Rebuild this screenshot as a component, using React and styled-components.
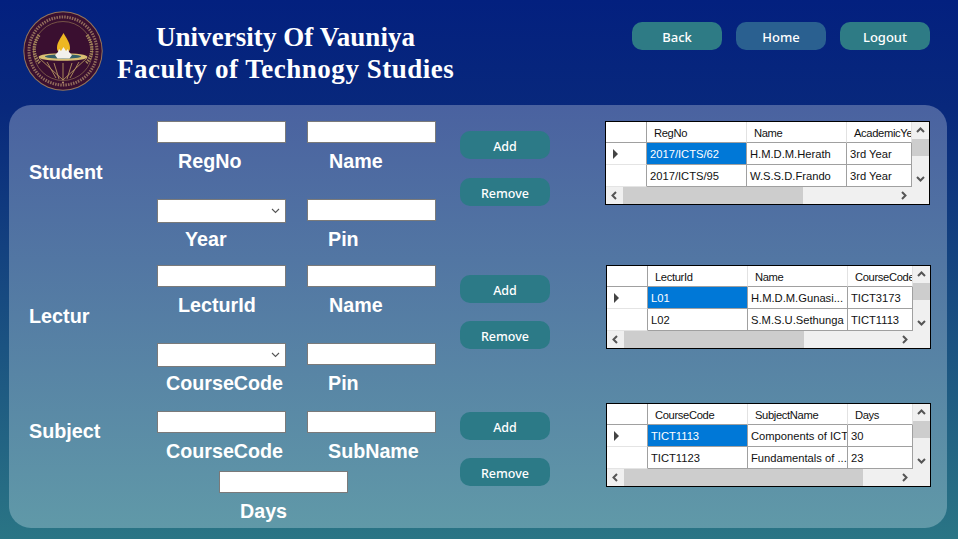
import React from 'react';
import styled, { createGlobalStyle } from 'styled-components';

const GlobalStyle = createGlobalStyle`
  html, body {
    margin: 0;
    padding: 0;
  }
  * {
    box-sizing: border-box;
  }
`;

const students = {
  columns: ['RegNo', 'Name', 'AcademicYear'],
  rows: [
    ['2017/ICTS/62', 'H.M.D.M.Herath', '3rd Year'],
    ['2017/ICTS/95', 'W.S.S.D.Frando', '3rd Year'],
  ],
  thumb: 180,
};

const lecturers = {
  columns: ['LecturId', 'Name', 'CourseCode'],
  rows: [
    ['L01', 'H.M.D.M.Gunasi...', 'TICT3173'],
    ['L02', 'S.M.S.U.Sethunga', 'TICT1113'],
  ],
  thumb: 180,
};

const subjects = {
  columns: ['CourseCode', 'SubjectName', 'Days'],
  rows: [
    ['TICT1113', 'Components of ICT', '30'],
    ['TICT1123', 'Fundamentals of ...', '23'],
  ],
  thumb: 239,
};

const Logo = () => (
  <svg width="80" height="80" viewBox="0 0 80 80">
    <circle cx="40" cy="40" r="39.7" fill="#96755a" />
    <circle cx="40" cy="40" r="38.7" fill="#3a0f30" />
    <circle cx="40" cy="40" r="34" fill="none" stroke="#c9a878" strokeWidth="3" strokeDasharray="1.5 1.1" opacity="0.6" />
    <circle cx="40" cy="40" r="29.5" fill="none" stroke="#8f7050" strokeWidth="0.7" />
    {/* wreath */}
    <path d="M16 24 C9 34 10 46 17 52" fill="none" stroke="#a5875c" strokeWidth="3.4" strokeDasharray="1.4 1" />
    <path d="M64 24 C71 34 70 46 63 52" fill="none" stroke="#a5875c" strokeWidth="3.4" strokeDasharray="1.4 1" />
    {/* flame */}
    <path d="M40.5 22 C43 27 47 31 47 37 C47 41 44 42 40.5 42 C37 42 34 41 34 37 C34 31 38 27 40.5 22 Z" fill="#eeb722" />
    {/* bowl */}
    <path
      d="M16 47 L40 69 L64 47 M24 51 L33 67 M31 52 L36 68 M40 52 L40 69 M49 52 L44 68 M56 51 L47 67"
      fill="none"
      stroke="#b4935f"
      strokeWidth="0.9"
    />
    <ellipse cx="40" cy="46" rx="24.5" ry="3.8" fill="#d9bf73" />
    <ellipse cx="40" cy="45.5" rx="18" ry="2.2" fill="#34606a" />
    {/* lotus */}
    <path d="M32 44 L35 41 L36 38 L38 40 L40.5 36 L43 40 L45 38 L46 41 L49 44 L46.5 47.5 L34.5 47.5 Z" fill="#f2f0ec" />
    <circle cx="40" cy="71.5" r="0.9" fill="#c9a878" />
  </svg>
);

const Chevron = () => (
  <svg width="9" height="6" viewBox="0 0 9 6">
    <path d="M1 1 L4.5 4.5 L8 1" fill="none" stroke="#555" strokeWidth="1.1" />
  </svg>
);

const Arrow = ({ dir }) => {
  const paths = {
    up: 'M1 6 L4.5 2.5 L8 6',
    down: 'M1 3 L4.5 6.5 L8 3',
    left: 'M6 1 L2.5 4.5 L6 8',
    right: 'M3 1 L6.5 4.5 L3 8',
  };
  return (
    <svg width="9" height="9" viewBox="0 0 9 9">
      <path d={paths[dir]} fill="none" stroke="#555" strokeWidth="2" />
    </svg>
  );
};

const DataTable = ({ data, shift }) => (
  <TableBox $shift={shift}>
    <TableTop>
      <TableBody>
        <GridRow $header>
          <RowHead $header />
          {data.columns.map((col) => (
            <HeadCell key={col}>{col}</HeadCell>
          ))}
        </GridRow>
        {data.rows.map((row, i) => (
          <GridRow key={row[0]}>
            <RowHead>{i === 0 && <Pointer />}</RowHead>
            {row.map((cell, j) => (
              <Cell key={cell + j} $selected={i === 0 && j === 0}>
                {cell}
              </Cell>
            ))}
          </GridRow>
        ))}
      </TableBody>
      <VScroll>
        <ScrollBtn $h={17}><Arrow dir="up" /></ScrollBtn>
        <VThumb />
        <Track />
        <ScrollBtn $h={17}><Arrow dir="down" /></ScrollBtn>
      </VScroll>
    </TableTop>
    <HScroll>
      <ScrollBtn $w={17}><Arrow dir="left" /></ScrollBtn>
      <HThumb style={{ width: data.thumb }} />
      <Track />
      <ScrollBtn $w={17}><Arrow dir="right" /></ScrollBtn>
      <Corner />
    </HScroll>
  </TableBox>
);

const Field = ({ label, indent, combo }) => (
  <FieldBox>
    {combo ? (
      <Combo>
        <Chevron />
      </Combo>
    ) : (
      <TextInput type="text" />
    )}
    <FieldLabel $indent={indent}>{label}</FieldLabel>
  </FieldBox>
);

export default function App() {
  return (
    <Page>
      <GlobalStyle />
      <Header>
        <LogoWrap>
          <Logo />
        </LogoWrap>
        <Title>
          <TitleLine $spacing={0.05}>University Of Vauniya</TitleLine>
          <TitleLine $spacing={0.52}>Faculty of Technogy Studies</TitleLine>
        </Title>
        <NavButtons>
          <NavButton>Back</NavButton>
          <NavButton $home>Home</NavButton>
          <NavButton>Logout</NavButton>
        </NavButtons>
      </Header>

      <Panel>
        <Section $height={144}>
          <SectionName $top={40}>Student</SectionName>
          <Fields $gap={26}>
            <Field label="RegNo" indent={21} />
            <Field label="Name" indent={22} />
            <Field label="Year" indent={28} combo />
            <Field label="Pin" indent={21} />
          </Fields>
          <Actions $top={10} $gap={19}>
            <ActionButton>Add</ActionButton>
            <ActionButton>Remove</ActionButton>
          </Actions>
          <DataTable data={students} />
        </Section>

        <Section $height={138}>
          <SectionName $top={40}>Lectur</SectionName>
          <Fields $gap={26}>
            <Field label="LecturId" indent={21} />
            <Field label="Name" indent={22} />
            <Field label="CourseCode" indent={9} combo />
            <Field label="Pin" indent={21} />
          </Fields>
          <Actions $top={10} $gap={18}>
            <ActionButton>Add</ActionButton>
            <ActionButton>Remove</ActionButton>
          </Actions>
          <DataTable data={lecturers} shift={1} />
        </Section>

        <Section>
          <SectionName $top={17}>Subject</SectionName>
          <Fields $gap={8} $top={8}>
            <Field label="CourseCode" indent={9} />
            <Field label="SubName" indent={21} />
            <DaysRow>
              <Field label="Days" indent={21} />
            </DaysRow>
          </Fields>
          <Actions $top={9} $gap={18}>
            <ActionButton>Add</ActionButton>
            <ActionButton>Remove</ActionButton>
          </Actions>
          <DataTable data={subjects} shift={1} />
        </Section>
      </Panel>
    </Page>
  );
}

const Page = styled.div`
  width: 958px;
  height: 539px;
  overflow: hidden;
  display: flex;
  flex-direction: column;
  background: linear-gradient(180deg, #03207f 0%, #08287c 20%, #2a7585 100%);
`;

const Header = styled.header`
  height: 105px;
  flex-shrink: 0;
  display: flex;
  align-items: flex-start;
`;

const LogoWrap = styled.div`
  width: 80px;
  height: 80px;
  margin: 11px 0 0 23px;
  flex-shrink: 0;
`;

const Title = styled.h1`
  margin: 21px 0 0 14px;
  width: 337px;
  flex-shrink: 0;
  font-family: "Liberation Serif", serif;
  font-weight: 700;
  font-size: 27px;
  line-height: 32px;
  text-align: center;
  color: #fff;
  white-space: nowrap;
`;

const TitleLine = styled.div`
  letter-spacing: ${(p) => p.$spacing}px;
`;

const NavButtons = styled.nav`
  display: flex;
  gap: 14px;
  margin: 22px 0 0 178px;
`;

const NavButton = styled.button`
  width: 90px;
  height: 28px;
  padding: 2px 0 0;
  border: none;
  border-radius: 10px;
  background: ${(p) => (p.$home ? '#2a6090' : '#2e7b85')};
  color: #fff;
  font-family: "Noto Sans", sans-serif;
  font-size: 13px;
  font-weight: 500;
`;

const Panel = styled.main`
  width: 938px;
  height: 423px;
  margin-left: 9px;
  padding: 16px 0 0 20px;
  border-radius: 22px;
  background: linear-gradient(180deg, #4a62a0 0%, #6099a8 100%);
`;

const Section = styled.section`
  display: flex;
  align-items: flex-start;
  height: ${(p) => (p.$height ? `${p.$height}px` : 'auto')};
`;

const SectionName = styled.h2`
  width: 128px;
  flex-shrink: 0;
  margin: 0;
  padding-top: ${(p) => p.$top}px;
  font-family: "Liberation Sans", Arial, sans-serif;
  font-size: 19.8px;
  line-height: 23px;
  font-weight: 700;
  color: #fff;
`;

const Fields = styled.div`
  display: grid;
  grid-template-columns: 129px 129px;
  column-gap: 21px;
  row-gap: ${(p) => p.$gap}px;
  padding-top: ${(p) => p.$top || 0}px;
  width: 279px;
  flex-shrink: 0;
`;

const FieldBox = styled.div`
  display: flex;
  flex-direction: column;
  width: 129px;
`;

const DaysRow = styled.div`
  grid-column: 1 / span 2;
  padding-left: 62px;
`;

const TextInput = styled.input`
  width: 129px;
  height: 22px;
  margin: 0;
  padding: 0;
  border: 1px solid #7a7a7a;
  background: #fff;
  outline: none;
`;

const Combo = styled.div`
  width: 129px;
  height: 24px;
  margin-bottom: -2px;
  padding-right: 5px;
  display: flex;
  align-items: center;
  justify-content: flex-end;
  border: 1px solid #7a7a7a;
  background: #fff;
`;

const FieldLabel = styled.label`
  margin: 7px 0 0 ${(p) => p.$indent}px;
  font-family: "Liberation Sans", Arial, sans-serif;
  font-size: 19.7px;
  line-height: 23px;
  font-weight: 700;
  color: #fff;
  white-space: nowrap;
`;

const Actions = styled.div`
  width: 90px;
  margin-left: 24px;
  flex-shrink: 0;
  padding-top: ${(p) => p.$top}px;
  display: flex;
  flex-direction: column;
  gap: ${(p) => p.$gap}px;
`;

const ActionButton = styled.button`
  width: 90px;
  height: 28px;
  padding: 2px 0 0;
  border: none;
  border-radius: 10px;
  background: #2c7a87;
  color: #fff;
  font-family: "Noto Sans", sans-serif;
  font-size: 12.5px;
  font-weight: 500;
`;

const TableBox = styled.div`
  width: 325px;
  height: 84px;
  margin-left: ${(p) => 55 + (p.$shift || 0)}px;
  flex-shrink: 0;
  display: flex;
  flex-direction: column;
  border: 1px solid #000;
  background: #f0f0f0;
`;

const TableTop = styled.div`
  display: flex;
  height: 65px;
  background: #fff;
`;

const TableBody = styled.div`
  width: 306px;
  overflow: hidden;
  flex-shrink: 0;
`;

const GridRow = styled.div`
  display: grid;
  grid-template-columns: 41px 100px 100px 65px;
  height: ${(p) => (p.$header ? '21px' : '22px')};
`;

const RowHead = styled.div`
  display: flex;
  align-items: center;
  padding-left: 7px;
  background: #fff;
  border-right: 1px solid #a0a0a0;
  border-bottom: 1px solid ${(p) => (p.$header ? '#a0a0a0' : '#e4e4e4')};
`;

const Pointer = styled.span`
  width: 0;
  height: 0;
  border-top: 5px solid transparent;
  border-bottom: 5px solid transparent;
  border-left: 5px solid #444;
`;

const HeadCell = styled.div`
  padding-left: 7px;
  font-family: "Liberation Sans", Arial, sans-serif;
  font-size: 11.2px;
  letter-spacing: -0.35px;
  line-height: 22px;
  color: #111;
  white-space: nowrap;
  overflow: hidden;
  border-right: 1px solid #e2e2e2;
  border-bottom: 1px solid #a0a0a0;
`;

const Cell = styled.div`
  padding-left: 3px;
  font-family: "Liberation Sans", Arial, sans-serif;
  font-size: 11.2px;
  line-height: 22px;
  white-space: nowrap;
  overflow: hidden;
  color: ${(p) => (p.$selected ? '#fff' : '#111')};
  background: ${(p) => (p.$selected ? '#0078d7' : '#fff')};
  border-right: 1px solid #a0a0a0;
  border-bottom: 1px solid #a0a0a0;
`;

const VScroll = styled.div`
  flex: 1;
  display: flex;
  flex-direction: column;
  background: #f0f0f0;
`;

const ScrollBtn = styled.div`
  display: flex;
  align-items: center;
  justify-content: center;
  flex-shrink: 0;
  ${(p) => p.$w && `width: ${p.$w}px;`}
  ${(p) => p.$h && `height: ${p.$h}px;`}
`;

const VThumb = styled.div`
  height: 17px;
  background: #cdcdcd;
`;

const Track = styled.div`
  flex: 1;
`;

const HScroll = styled.div`
  flex: 1;
  display: flex;
  background: #f0f0f0;
`;

const HThumb = styled.div`
  background: #cdcdcd;
`;

const Corner = styled.div`
  width: 17px;
  flex-shrink: 0;
`;
